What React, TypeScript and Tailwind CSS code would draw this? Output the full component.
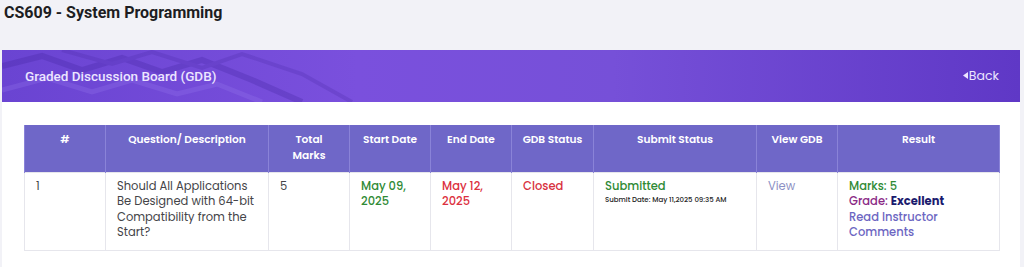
import React from "react";

type Column = {
  label: string[];
  width: string;
};

const columns: Column[] = [
  { label: ["#"], width: "w-[81px]" },
  { label: ["Question/ Description"], width: "w-[163px]" },
  { label: ["Total", "Marks"], width: "w-[81px]" },
  { label: ["Start Date"], width: "w-[81px]" },
  { label: ["End Date"], width: "w-[81px]" },
  { label: ["GDB Status"], width: "w-[82px]" },
  { label: ["Submit Status"], width: "w-[163px]" },
  { label: ["View GDB"], width: "w-[81px]" },
  { label: ["Result"], width: "w-[162px]" },
];

const cell = "border border-[#e6e6ec] px-[11px] pt-[6px] pb-2 align-top";

export default function App() {
  return (
    <div className="min-h-screen bg-[#f2f2f7] font-['Poppins','Open_Sans',sans-serif]">
      <h1 className="px-1 pt-[1px] font-['Roboto',sans-serif] text-[16px] font-bold leading-[24px] text-[#1d1d22]">
        CS609 - System Programming
      </h1>

      <div className="mx-[2px] mt-[25px] mr-[4px] bg-white pb-[18px]">
        <div className="relative flex h-[52px] items-center justify-between overflow-hidden bg-[linear-gradient(90deg,#6a44d2_0%,#7a50dd_35%,#7650d8_60%,#5f38c6_100%)] pl-[23px] pr-[21px]">
          <svg
            className="absolute inset-0 h-full w-[420px] opacity-25"
            viewBox="0 0 420 52"
            fill="none"
          >
            <path d="M0 16 L40 6 L80 20 L120 8 L160 22 L200 10 L250 30 L300 52" stroke="#3d1f9a" strokeWidth="6" />
            <path d="M0 40 L45 28 L90 42 L130 30 L175 44 L215 34 L260 52" stroke="#9a7cf0" strokeWidth="5" />
            <path d="M60 0 L110 14 L150 2 L200 18 L240 4 L300 24 L350 52" stroke="#4b2aa8" strokeWidth="4" />
          </svg>
          <h2 className="relative font-['Roboto',sans-serif] text-[13.5px] font-medium text-[#ece6ff]">
            Graded Discussion Board (GDB)
          </h2>
          <a className="relative flex items-center gap-[1px] text-[12.5px] text-[#ece6ff]">
            <svg width="5" height="7" viewBox="0 0 5 7" className="mb-[1px]">
              <path d="M5 0 L0 3.5 L5 7 Z" fill="#ece6ff" />
            </svg>
            Back
          </a>
        </div>

        <div className="px-[22px] pt-[23px]">
          <table className="w-[975px] table-fixed border-collapse text-[11.5px] leading-[15.3px]">
            <thead>
              <tr className="h-[45px] bg-[#6f67c8] text-white">
                {columns.map((c) => (
                  <th
                    key={c.label.join(" ")}
                    className={`${c.width} border-x border-[#8a83d8] px-2 pt-[7px] pb-2 text-center align-top text-[10.6px] font-semibold leading-[16px]`}
                  >
                    {c.label.map((l) => (
                      <div key={l}>{l}</div>
                    ))}
                  </th>
                ))}
              </tr>
            </thead>
            <tbody className="text-[#444448]">
              <tr className="h-[78px]">
                <td className={cell}>1</td>
                <td className={cell}>
                  Should All Applications Be Designed with 64-bit Compatibility from the Start?
                </td>
                <td className={cell}>5</td>
                <td className={`${cell} font-medium text-[#2f8a35]`}>May 09, 2025</td>
                <td className={`${cell} font-medium text-[#dc3040]`}>May 12, 2025</td>
                <td className={`${cell} font-medium text-[#d8323f]`}>Closed</td>
                <td className={cell}>
                  <div className="font-medium text-[#2f8a35]">Submitted</div>
                  <div className="mt-[1px] text-[7px] font-medium leading-[10px] text-[#222]">
                    Submit Date: May 11,2025 09:35 AM
                  </div>
                </td>
                <td className={`${cell} text-[#8d91c4]`}>View</td>
                <td className={cell}>
                  <div className="font-medium text-[#2f8a35]">Marks: 5</div>
                  <div className="font-medium text-[#8b2a86]">
                    Grade: <span className="font-bold text-[#1b1a6e]">Excellent</span>
                  </div>
                  <div className="font-medium text-[#6c66c2]">Read Instructor Comments</div>
                </td>
              </tr>
            </tbody>
          </table>
        </div>
      </div>
    </div>
  );
}
